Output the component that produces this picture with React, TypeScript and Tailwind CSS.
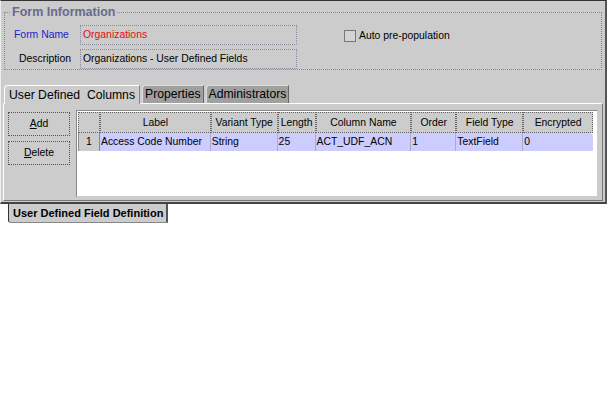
import React from 'react';

const columns = [
  { label: '', w: 'w-[22px]' },
  { label: 'Label', w: 'w-[111px]' },
  { label: 'Variant Type', w: 'w-[67px]' },
  { label: 'Length', w: 'w-[38px]' },
  { label: 'Column Name', w: 'w-[96px]' },
  { label: 'Order', w: 'w-[45px]' },
  { label: 'Field Type', w: 'w-[67px]' },
  { label: 'Encrypted', w: 'w-[70px]' },
];

const row = ['1', 'Access Code Number', 'String', '25', 'ACT_UDF_ACN', '1', 'TextField', '0'];

const App = () => {
  return (
    <div className="w-[608px] h-[399px] bg-white font-['Liberation_Sans',Arial,sans-serif] text-[10.4px] text-black">
      {/* Outer window */}
      <div className="w-[607px] h-[204px] bg-[#cccccc] border-t border-t-[#333] border-r-2 border-r-[#555] border-b-2 border-b-[#444] border-l border-l-[#eee] flex flex-col">
        {/* Form information group */}
        <fieldset className="mx-[3px] mt-[4px] h-[65px] border border-dotted border-[#888] px-[8px] pb-0">
          <legend className="px-[1px] -ml-[2px] text-[12.5px] text-[#6a6a8c] font-bold leading-[14px]">Form Information</legend>
          <div className="flex gap-[47px] mt-[6px]">
            <div className="flex flex-col gap-[4px]">
              <div className="flex items-center">
                <span className="w-[67px] pl-[1px] text-[#2222cc]">Form Name</span>
                <div className="w-[217px] h-[20px] border border-dotted border-[#8a8a9a] flex items-center px-[2px] text-[#e01010]">
                  Organizations
                </div>
              </div>
              <div className="flex items-center">
                <span className="w-[67px] pl-[6px]">Description</span>
                <div className="w-[217px] h-[20px] border border-dotted border-[#8a8a9a] flex items-center px-[2px]">
                  Organizations - User Defined Fields
                </div>
              </div>
            </div>
            <div className="flex items-center gap-[3px] h-[20px] mt-[1px]">
              <span className="w-[12px] h-[12px] border border-[#777] bg-[#d4d4d4]" />
              <span>Auto pre-population</span>
            </div>
          </div>
        </fieldset>

        {/* Tabs */}
        <div className="flex items-end mt-[14px] ml-[3px] h-[19px] gap-[2px]">
          <div className="h-[19px] px-[4px] bg-[#cccccc] border-t border-l border-white rounded-tl-[4px] border-r border-r-[#888] text-[12.2px] leading-[18px] -mb-px relative z-10 whitespace-pre">
            User Defined  Columns
          </div>
          <div className="h-[18px] px-[2px] bg-[#a0a0a0] border-t border-l border-[#ddd] rounded-tl-[4px] border-r border-r-[#666] text-[12.2px] leading-[17px]">
            Properties
          </div>
          <div className="h-[18px] px-[2px] bg-[#a0a0a0] border-t border-l border-[#ddd] rounded-tl-[4px] border-r border-r-[#666] text-[12.2px] leading-[17px]">
            Administrators
          </div>
        </div>

        {/* Tab panel */}
        <div className="mx-[2px] h-[98px] border-t border-l border-white border-r border-r-[#777] border-b border-b-[#777] flex gap-[6px] px-[4px] pt-[6px]">
          <div className="flex flex-col gap-[5px] pt-[2px]">
            <button className="w-[62px] h-[24px] border border-dotted border-[#555] bg-[#cccccc]">
              <span className="underline">A</span>dd
            </button>
            <button className="w-[62px] h-[24px] border border-dotted border-[#555] bg-[#cccccc]">
              <span className="underline">D</span>elete
            </button>
          </div>
          <div className="w-[522px] h-[87px] bg-white border border-[#888] border-r-[#ccc] border-b-[#ccc] p-[1px] pr-[4px]">
            <div className="flex">
              {columns.map((c, i) => (
                <div
                  key={i}
                  className={`${c.w} h-[21px] bg-[#cccccc] border border-dotted border-[#666] flex items-center justify-center`}
                >
                  {c.label}
                </div>
              ))}
            </div>
            <div className="flex h-[18px]">
              {row.map((v, i) => (
                <div
                  key={i}
                  className={`${columns[i].w} h-[18px] flex items-center ${
                    i === 0
                      ? 'bg-[#cccccc] justify-center border-l border-r border-[#888]'
                      : 'bg-[#ccccff] pl-[1px] border-r border-[#aaaacc]'
                  } ${i === row.length - 1 ? 'rounded-tr-[4px] border-r-0' : ''}`}
                >
                  {v}
                </div>
              ))}
            </div>
          </div>
        </div>
      </div>

      {/* Bottom tab */}
      <div className="ml-[8px] w-[160px] h-[19px] bg-[#cccccc] border-l border-l-[#333] border-r-2 border-r-[#555] border-b border-b-[#888] rounded-bl-[3px] flex items-center pl-[4px] text-[11px] font-bold whitespace-nowrap">
        User Defined Field Definition
      </div>
    </div>
  );
};

export default App;
